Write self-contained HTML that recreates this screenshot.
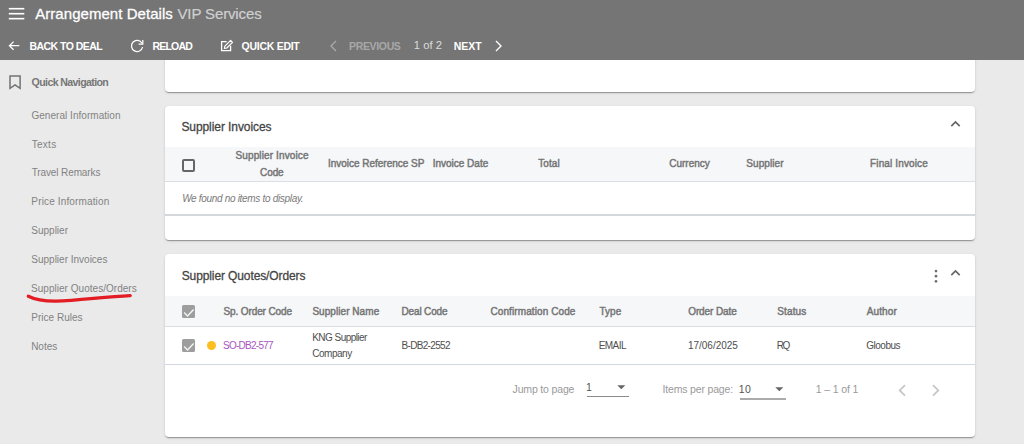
<!DOCTYPE html>
<html><head><meta charset="utf-8">
<style>
*{margin:0;padding:0;box-sizing:border-box}
html,body{width:1024px;height:444px;overflow:hidden;background:#eaeaea;font-family:"Liberation Sans",sans-serif}
.a{position:absolute;white-space:nowrap;line-height:1}
.card{position:absolute;left:165px;width:810px;background:#fff;border-radius:4px;box-shadow:0 2px 1px -1px rgba(0,0,0,.2),0 1px 1px 0 rgba(0,0,0,.14),0 1px 3px 0 rgba(0,0,0,.12)}
.hrow{position:absolute;left:165px;width:810px;background:#f5f7f9}
.ln{position:absolute;left:165px;width:810px;height:1.5px;background:#d9dfe4}
.cb{position:absolute;width:13.2px;height:13.1px;border:2px solid #666;border-radius:2px}
.cbc{position:absolute;width:13.4px;height:13.2px;background:#9e9e9e;border-radius:1.5px}
</style></head><body>
<!-- card 1 -->
<div class="card" style="top:40px;height:51.6px"></div>
<!-- card 2 -->
<div class="card" style="top:105.7px;height:134.8px"></div>
<div class="hrow" style="top:146.8px;height:34.6px"></div>
<div class="ln" style="top:180.7px"></div>
<div class="ln" style="top:213.9px;height:2px;background:#d5d8db"></div>
<!-- card 3 -->
<div class="card" style="top:254.4px;height:182.8px"></div>
<div class="hrow" style="top:296.2px;height:30px"></div>
<div class="ln" style="top:325.8px;height:1.6px"></div>
<div class="ln" style="top:363.6px;height:1.9px;background:#d3d9de"></div>

<div id="hdr" style="position:absolute;left:0;top:0;width:1024px;height:59.6px;background:#757575"></div>
<!-- hamburger -->
<svg class="a" style="left:0;top:0" width="30" height="24" viewBox="0 0 30 24"><rect x="8.8" y="7.9" width="15.5" height="1.6" fill="#fff"/><rect x="8.8" y="12.9" width="15.5" height="1.6" fill="#fff"/><rect x="8.8" y="17.85" width="15.5" height="1.6" fill="#fff"/></svg>
<!-- back arrow -->
<svg class="a" style="left:8px;top:41px" width="12" height="10" viewBox="0 0 12 10"><path d="M11.3 4.7H1.6M5.6 0.6L1.4 4.7l4.2 4.1" stroke="#fff" stroke-width="1.25" fill="none"/></svg>
<!-- reload -->
<svg class="a" style="left:130px;top:39px" width="14" height="14" viewBox="0 0 14 14"><path d="M12 4.2A5.6 5.6 0 1 0 12.6 8" stroke="#fff" stroke-width="1.25" fill="none"/><path d="M12.8 1v4.2H8.6" stroke="#fff" stroke-width="1.25" fill="none"/></svg>
<!-- edit -->
<svg class="a" style="left:220px;top:39px" width="14" height="14" viewBox="0 0 14 14"><path d="M6.6 2.6H1.6V11.7H10.6V6.8" stroke="#fff" stroke-width="1.3" fill="none"/><path d="M4.4 9.4L4.9 7.1 10.6 1.4 12.5 3.3 6.8 9z" stroke="#fff" stroke-width="1.2" fill="none" stroke-linejoin="round"/></svg>
<svg class="a" style="left:329px;top:40px" width="9" height="12" viewBox="0 0 9 12"><path d="M7 1L2 6l5 5" stroke="#a9a9a9" stroke-width="1.4" fill="none"/></svg>
<svg class="a" style="left:494px;top:40px" width="9" height="12" viewBox="0 0 9 12"><path d="M2 1l5 5-5 5" stroke="#fff" stroke-width="1.4" fill="none"/></svg>

<!-- sidebar bookmark -->
<svg class="a" style="left:9px;top:75px" width="13" height="15" viewBox="0 0 13 15"><path d="M1 1H11.1V13.4L6.05 9.8 1 13.4Z" stroke="#737373" stroke-width="1.5" fill="none"/></svg>
<!-- red underline -->
<svg class="a" style="left:0;top:280px" width="160" height="30" viewBox="0 280 160 30"><path d="M28.3 296.2C35 299.6 44 301.2 56 301.1C78 300.6 104 296.8 130.2 295.6" stroke="#e21d24" stroke-width="3.3" fill="none" stroke-linecap="round"/></svg>

<!-- card2 icons -->
<svg class="a" style="left:949px;top:118.6px" width="13" height="10" viewBox="0 0 13 10"><path d="M2.3 7.1L6.5 2.9l4.2 4.2" stroke="#666" stroke-width="1.7" fill="none"/></svg>
<div class="cb" style="left:182.3px;top:158.6px"></div>

<!-- card3 icons -->
<svg class="a" style="left:933.2px;top:268px" width="6" height="16" viewBox="0 0 6 16"><circle cx="3" cy="3.1" r="1.35" fill="#6e6e6e"/><circle cx="3" cy="8.2" r="1.35" fill="#6e6e6e"/><circle cx="3" cy="13.3" r="1.35" fill="#6e6e6e"/></svg>
<svg class="a" style="left:949px;top:267.6px" width="13" height="10" viewBox="0 0 13 10"><path d="M2.3 7.1L6.5 2.9l4.2 4.2" stroke="#666" stroke-width="1.7" fill="none"/></svg>
<div class="cbc" style="left:182px;top:305px"><svg width="13" height="13" viewBox="0 0 13 13"><path d="M2.2 6.6L5.5 9.9 11.6 3.6" stroke="#f4f4f4" stroke-width="1.4" fill="none"/></svg></div>
<div class="cbc" style="left:182px;top:339.3px"><svg width="13" height="13" viewBox="0 0 13 13"><path d="M2.2 6.6L5.5 9.9 11.6 3.6" stroke="#f4f4f4" stroke-width="1.4" fill="none"/></svg></div>
<div class="a" style="left:206.8px;top:340.8px;width:9px;height:9px;border-radius:50%;background:#fcbf1f"></div>

<!-- paginator -->
<svg class="a" style="left:616.7px;top:384.7px" width="9" height="5" viewBox="0 0 9 5"><path d="M0.3 0.3h8L4.3 4.2z" fill="#666"/></svg>
<div class="a" style="left:586.7px;top:396px;width:42.2px;height:1px;background:#8a8a8a"></div>
<svg class="a" style="left:774.7px;top:386.6px" width="9" height="5" viewBox="0 0 9 5"><path d="M0.3 0.3h8L4.3 4.2z" fill="#666"/></svg>
<div class="a" style="left:739.6px;top:398px;width:46.5px;height:1.6px;background:#ababab"></div>
<svg class="a" style="left:897px;top:383.6px" width="10" height="13" viewBox="0 0 10 13"><path d="M8 1.2L2.7 6.4 8 11.6" stroke="#c6c6c6" stroke-width="1.75" fill="none"/></svg>
<svg class="a" style="left:931px;top:383.6px" width="10" height="13" viewBox="0 0 10 13"><path d="M2 1.2L7.3 6.4 2 11.6" stroke="#c6c6c6" stroke-width="1.75" fill="none"/></svg>

<div class="a" id="t_title" style="left:35.19px;top:6.40px;font-size:15px;color:#ffffff;letter-spacing:0.053px;-webkit-text-stroke:0.28px #ffffff">Arrangement Details</div>
<div class="a" id="t_vip" style="left:177.49px;top:6.40px;font-size:15px;color:#d0d0d0;letter-spacing:-0.129px;-webkit-text-stroke:0.2px #d0d0d0">VIP Services</div>
<div class="a" id="t_back" style="left:29.40px;top:41.11px;font-size:10.5px;color:#ffffff;letter-spacing:-0.522px;font-weight:bold">BACK TO DEAL</div>
<div class="a" id="t_reload" style="left:152.40px;top:41.11px;font-size:10.5px;color:#ffffff;letter-spacing:-0.785px;font-weight:bold">RELOAD</div>
<div class="a" id="t_qedit" style="left:241.59px;top:41.11px;font-size:10.5px;color:#ffffff;letter-spacing:-0.274px;font-weight:bold">QUICK EDIT</div>
<div class="a" id="t_prev" style="left:349.12px;top:41.11px;font-size:10.5px;color:#a8a8a8;letter-spacing:-0.360px;font-weight:bold">PREVIOUS</div>
<div class="a" id="t_1of2" style="left:413.84px;top:39.77px;font-size:11.2px;color:#dcdcdc;letter-spacing:0.047px">1 of 2</div>
<div class="a" id="t_next" style="left:453.76px;top:41.11px;font-size:10.5px;color:#ffffff;letter-spacing:0.003px;font-weight:bold">NEXT</div>
<div class="a" id="s_qn" style="left:31.59px;top:76.73px;font-size:10.6px;color:#777777;letter-spacing:-0.618px;font-weight:bold">Quick Navigation</div>
<div class="a" id="s_1" style="left:31.38px;top:110.63px;font-size:10px;color:#828282;letter-spacing:0.042px">General Information</div>
<div class="a" id="s_2" style="left:31.68px;top:139.63px;font-size:10px;color:#828282;letter-spacing:0.280px">Texts</div>
<div class="a" id="s_3" style="left:31.68px;top:168.44px;font-size:10px;color:#828282;letter-spacing:-0.113px">Travel Remarks</div>
<div class="a" id="s_4" style="left:31.35px;top:197.34px;font-size:10px;color:#828282;letter-spacing:0.145px">Price Information</div>
<div class="a" id="s_5" style="left:31.29px;top:226.34px;font-size:10px;color:#828282">Supplier</div>
<div class="a" id="s_6" style="left:31.29px;top:255.34px;font-size:10px;color:#828282">Supplier Invoices</div>
<div class="a" id="s_7" style="left:31.04px;top:284.34px;font-size:10px;color:#828282;letter-spacing:0.029px">Supplier Quotes/Orders</div>
<div class="a" id="s_8" style="left:31.35px;top:313.34px;font-size:10px;color:#828282">Price Rules</div>
<div class="a" id="s_9" style="left:31.14px;top:342.34px;font-size:10px;color:#828282">Notes</div>
<div class="a" id="c2_title" style="left:181.38px;top:121.14px;font-size:12px;color:#444444;letter-spacing:-0.075px;-webkit-text-stroke:0.28px #444444">Supplier Invoices</div>
<div class="a" id="c2_h1a" style="left:235.52px;top:151.34px;font-size:10px;color:#757575;letter-spacing:0.125px;-webkit-text-stroke:0.45px #757575">Supplier Invoice</div>
<div class="a" id="c2_h1b" style="left:260.11px;top:167.73px;font-size:10px;color:#757575;letter-spacing:-0.122px;-webkit-text-stroke:0.45px #757575">Code</div>
<div class="a" id="c2_h2" style="left:327.90px;top:159.34px;font-size:10px;color:#757575;letter-spacing:-0.012px;-webkit-text-stroke:0.45px #757575">Invoice Reference SP</div>
<div class="a" id="c2_h3" style="left:432.65px;top:159.34px;font-size:10px;color:#757575;letter-spacing:-0.001px;-webkit-text-stroke:0.45px #757575">Invoice Date</div>
<div class="a" id="c2_h4" style="left:538.31px;top:159.34px;font-size:10px;color:#757575;letter-spacing:0.073px;-webkit-text-stroke:0.45px #757575">Total</div>
<div class="a" id="c2_h5" style="left:669.28px;top:159.34px;font-size:10px;color:#757575;letter-spacing:-0.012px;-webkit-text-stroke:0.45px #757575">Currency</div>
<div class="a" id="c2_h6" style="left:746.31px;top:159.34px;font-size:10px;color:#757575;letter-spacing:0.074px;-webkit-text-stroke:0.45px #757575">Supplier</div>
<div class="a" id="c2_h7" style="left:870.10px;top:159.34px;font-size:10px;color:#757575;letter-spacing:0.124px;-webkit-text-stroke:0.45px #757575">Final Invoice</div>
<div class="a" id="c2_empty" style="left:182.15px;top:194.23px;font-size:10px;color:#7a7a7a;letter-spacing:-0.314px;font-style:italic">We found no items to display.</div>
<div class="a" id="c3_title" style="left:181.72px;top:269.94px;font-size:12px;color:#444444;letter-spacing:-0.112px;-webkit-text-stroke:0.28px #444444">Supplier Quotes/Orders</div>
<div class="a" id="c3_h1" style="left:223.52px;top:306.74px;font-size:10px;color:#757575;letter-spacing:-0.114px;-webkit-text-stroke:0.45px #757575">Sp. Order Code</div>
<div class="a" id="c3_h2" style="left:312.39px;top:306.74px;font-size:10px;color:#757575;letter-spacing:0.056px;-webkit-text-stroke:0.45px #757575">Supplier Name</div>
<div class="a" id="c3_h3" style="left:401.50px;top:306.74px;font-size:10px;color:#757575;letter-spacing:-0.153px;-webkit-text-stroke:0.45px #757575">Deal Code</div>
<div class="a" id="c3_h4" style="left:490.49px;top:306.74px;font-size:10px;color:#757575;letter-spacing:0.094px;-webkit-text-stroke:0.45px #757575">Confirmation Code</div>
<div class="a" id="c3_h5" style="left:599.44px;top:306.74px;font-size:10px;color:#757575;letter-spacing:0.034px;-webkit-text-stroke:0.45px #757575">Type</div>
<div class="a" id="c3_h6" style="left:688.23px;top:306.74px;font-size:10px;color:#757575;letter-spacing:-0.109px;-webkit-text-stroke:0.45px #757575">Order Date</div>
<div class="a" id="c3_h7" style="left:777.31px;top:306.74px;font-size:10px;color:#757575;letter-spacing:0.125px;-webkit-text-stroke:0.45px #757575">Status</div>
<div class="a" id="c3_h8" style="left:866.76px;top:306.74px;font-size:10px;color:#757575;letter-spacing:0.109px;-webkit-text-stroke:0.45px #757575">Author</div>
<div class="a" id="c3_d1" style="left:223.06px;top:341.04px;font-size:10px;color:#a855c0;letter-spacing:-0.746px">SO-DB2-577</div>
<div class="a" id="c3_d2a" style="left:312.22px;top:332.74px;font-size:10px;color:#4e4e4e;letter-spacing:-0.542px">KNG Supplier</div>
<div class="a" id="c3_d2b" style="left:312.32px;top:348.94px;font-size:10px;color:#4e4e4e;letter-spacing:-0.491px">Company</div>
<div class="a" id="c3_d3" style="left:401.50px;top:341.04px;font-size:10px;color:#4e4e4e;letter-spacing:-0.670px">B-DB2-2552</div>
<div class="a" id="c3_d5" style="left:598.64px;top:341.04px;font-size:10px;color:#4e4e4e;letter-spacing:-0.549px">EMAIL</div>
<div class="a" id="c3_d6" style="left:687.98px;top:341.04px;font-size:10px;color:#4e4e4e;letter-spacing:-0.021px">17/06/2025</div>
<div class="a" id="c3_d7" style="left:776.77px;top:341.04px;font-size:10px;color:#4e4e4e;letter-spacing:-1.443px">RQ</div>
<div class="a" id="c3_d8" style="left:866.27px;top:341.04px;font-size:10px;color:#4e4e4e;letter-spacing:-0.488px">Gloobus</div>
<div class="a" id="p_jump" style="left:512.58px;top:384.21px;font-size:10.5px;color:#9a9a9a;letter-spacing:-0.163px">Jump to page</div>
<div class="a" id="p_1" style="left:586.12px;top:382.11px;font-size:10.5px;color:#555555">1</div>
<div class="a" id="p_ipp" style="left:662.49px;top:384.21px;font-size:10.5px;color:#9a9a9a;letter-spacing:-0.170px">Items per page:</div>
<div class="a" id="p_10" style="left:738.76px;top:383.91px;font-size:10.5px;color:#555555;letter-spacing:0.294px">10</div>
<div class="a" id="p_range" style="left:815.76px;top:384.01px;font-size:10.5px;color:#9a9a9a;letter-spacing:-0.127px">1 – 1 of 1</div>
</body></html>
